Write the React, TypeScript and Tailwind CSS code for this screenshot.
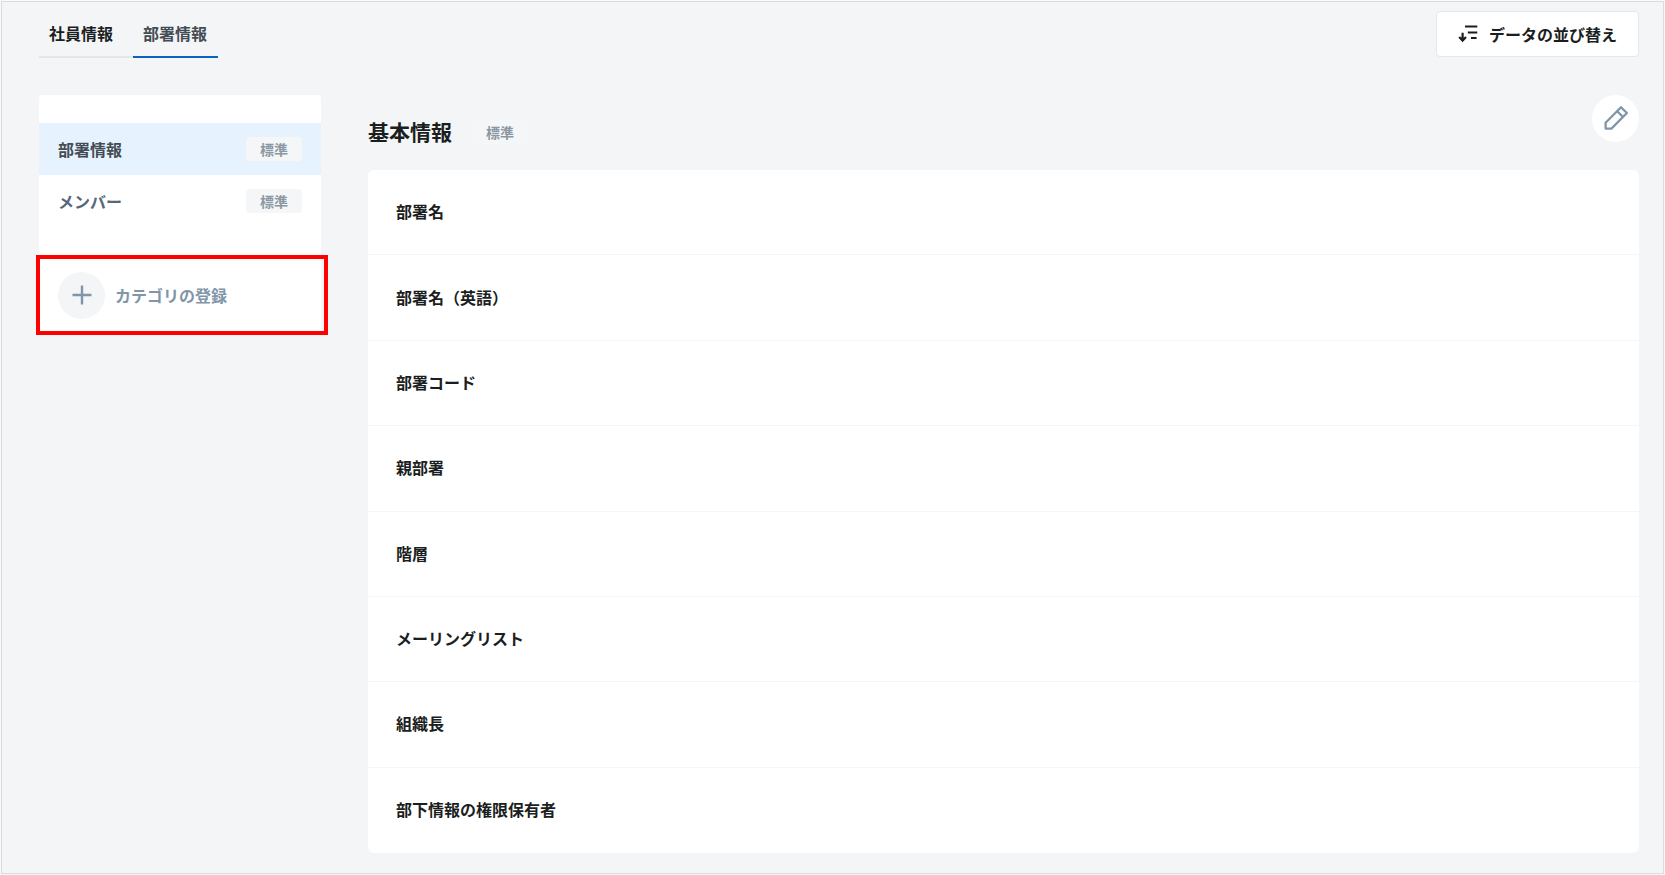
import React from "react";

const fields = [
  "部署名",
  "部署名（英語）",
  "部署コード",
  "親部署",
  "階層",
  "メーリングリスト",
  "組織長",
  "部下情報の権限保有者",
];

function StandardBadge() {
  return (
    <span className="flex h-6 w-14 items-center justify-center rounded-sm bg-[#f4f6f7] text-sm font-bold text-[#8b98a3]">
      標準
    </span>
  );
}

function SortIcon() {
  return (
    <svg width="20" height="20" viewBox="0 0 20 20" fill="none" stroke="currentColor" strokeWidth="2" aria-hidden="true">
      <path d="M7 2.5H19.3M9.8 8.6H19.3M13 14H18.6" />
      <path d="M4.6 8.8V16.5M1.2 13L4.6 16.6L8 13" strokeWidth="2.2" />
    </svg>
  );
}

function PencilIcon() {
  return (
    <svg width="27" height="27" viewBox="0 0 27 27" fill="none" stroke="currentColor" strokeWidth="2.3" strokeLinejoin="round" aria-hidden="true">
      <path d="M3.6 23.6V17.8L19 2.2L24.9 8L9.4 23.6Z" />
      <path d="M15.2 6.2L21 12" />
    </svg>
  );
}

function PlusIcon() {
  return (
    <svg width="20" height="20" viewBox="0 0 20 20" fill="none" stroke="currentColor" strokeWidth="2.4" aria-hidden="true">
      <path d="M10 0.5V19.5M0.5 10H19.5" />
    </svg>
  );
}

export default function App() {
  return (
    <div className="flex min-h-screen flex-col bg-[#f8f9f9] p-px font-['Noto_Sans_CJK_JP',sans-serif] text-base text-[#1b1e21]">
      <div className="flex flex-1 flex-col border border-[#d9dcde] bg-[#f3f5f7] pt-[9px] pr-6 pb-5 pl-[37px]">
        <header className="flex items-start justify-between">
          <nav className="flex" aria-label="情報の種類">
            <a href="#employee" className="flex h-[47px] w-[94px] items-center border-b-2 border-[#e3e6ea] pb-px pl-[10px] font-bold">
              社員情報
            </a>
            <a
              href="#department"
              aria-current="page"
              className="flex h-[47px] w-[85px] items-center border-b-2 border-[#0b63c0] pb-px pl-[10px] font-bold text-[#444c54]"
            >
              部署情報
            </a>
          </nav>
          <button type="button" className="flex h-[46px] items-center gap-[11px] rounded-sm border border-[#e3e8ec] bg-white px-[21px] pb-px font-bold">
            <SortIcon />
            データの並び替え
          </button>
        </header>

        <div className="mt-[37px] flex flex-1 items-stretch gap-[47px]">
          <aside className="w-[282px] shrink-0 self-start rounded-t-sm bg-white pt-7">
            <nav aria-label="カテゴリ">
              <a href="#info" aria-current="page" className="flex h-[52px] items-center justify-between bg-[#e6f3ff] px-[19px] font-bold text-[#444c54]">
                部署情報
                <StandardBadge />
              </a>
              <a href="#members" className="flex h-[52px] items-center justify-between px-[19px] font-bold text-[#56677a]">
                メンバー
                <StandardBadge />
              </a>
            </nav>
            <div className="relative mt-7">
              <button type="button" className="flex h-20 w-full items-center gap-[10px] px-[19px] font-bold text-[#8095a8]">
                <span className="flex size-[47px] items-center justify-center rounded-full bg-[#f3f5f7]">
                  <PlusIcon />
                </span>
                カテゴリの登録
              </button>
              <div className="pointer-events-none absolute top-0 -right-[7px] bottom-0 -left-[3px] border-4 border-[#ff0000]" />
            </div>
          </aside>

          <main className="flex min-w-0 flex-1 flex-col">
            <div className="flex h-[75px] items-start justify-between">
              <div className="flex h-full items-center gap-5 pb-0.5">
                <h1 className="text-[21px] font-bold">基本情報</h1>
                <StandardBadge />
              </div>
              <button type="button" aria-label="編集" className="flex size-[47px] items-center justify-center rounded-full bg-white text-[#8095a8]">
                <PencilIcon />
              </button>
            </div>
            <ul className="grid flex-1 auto-rows-fr divide-y divide-[#f5f6f7] rounded-md bg-white">
              {fields.map((name) => (
                <li key={name} className="flex min-h-16 items-center px-7 pb-0.5 font-bold">
                  {name}
                </li>
              ))}
            </ul>
          </main>
        </div>
      </div>
    </div>
  );
}
